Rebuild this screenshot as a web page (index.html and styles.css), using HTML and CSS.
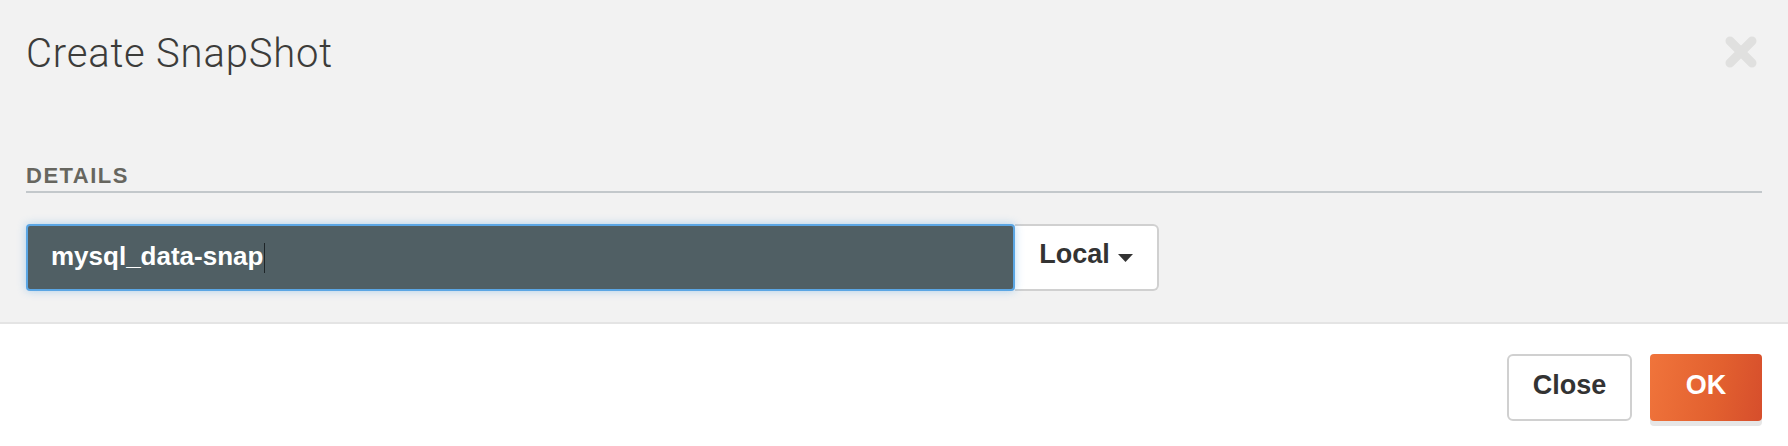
FILE: index.html
```html
<!DOCTYPE html>
<html lang="en">
<head>
<meta charset="utf-8">
<title>Create SnapShot</title>
<link rel="stylesheet" href="styles.css">
</head>
<body>
<div class="dialog">
  <div class="header">
    <div class="title-row">
      <h1 class="title">Create SnapShot</h1>
      <svg class="close-x" viewBox="0 0 32 32" aria-label="Close">
        <path d="M5 5 L27 27 M27 5 L5 27" stroke="#e0e0df" stroke-width="9" stroke-linecap="round" fill="none"/>
      </svg>
    </div>
    <div class="section-label">DETAILS</div>
    <div class="field-row">
      <div class="name-input"><span class="value">mysql_data-snap</span><span class="caret"></span></div>
      <div class="select"><span>Local</span><svg class="tri" viewBox="0 0 15 8"><path d="M0 0 H15 L7.5 8 Z" fill="#333"/></svg></div>
    </div>
  </div>
  <div class="footer">
    <button class="btn btn-close">Close</button>
    <button class="btn btn-ok">OK</button>
  </div>
</div>
</body>
</html>
```
FILE: styles.css
```css
html, body {
  margin: 0;
  padding: 0;
  background: #ffffff;
}
body {
  font-family: "Liberation Sans", Arial, sans-serif;
  width: 1788px;
}
.header {
  background: #f2f2f2;
  padding: 30px 26px 31px;
  border-bottom: 2px solid #e4e4e4;
}
.title-row {
  display: flex;
  justify-content: space-between;
  align-items: flex-start;
}
.title {
  margin: 0;
  font-family: Roboto, "Liberation Sans", sans-serif;
  font-weight: 300;
  font-size: 40px;
  line-height: 48px;
  letter-spacing: 0.8px;
  color: #3c3c3a;
}
.close-x {
  width: 32px;
  height: 32px;
  margin-top: 6px;
  margin-right: 5px;
}
.section-label {
  margin-top: 86px;
  font-size: 22px;
  font-weight: 700;
  line-height: 24px;
  letter-spacing: 1.5px;
  color: #67665f;
  padding-bottom: 3px;
  border-bottom: 2px solid #c3c8cb;
}
.field-row {
  margin-top: 31px;
  display: flex;
  height: 67px;
}
.name-input {
  width: 989px;
  box-sizing: border-box;
  background: #505f64;
  border: 2px solid #5ba6e4;
  border-radius: 4px;
  box-shadow: 0 0 8px rgba(91, 166, 228, 0.45);
  color: #ffffff;
  font-size: 26px;
  font-weight: 700;
  display: flex;
  align-items: center;
  padding: 0 0 3px 23px;
  position: relative;
  z-index: 1;
}
.caret {
  width: 1px;
  height: 30px;
  background: #1e2528;
  margin-left: 1px;
  margin-top: 4px;
}
.select {
  width: 144px;
  box-sizing: border-box;
  border: 2px solid #d0d0d0;
  border-left: none;
  border-radius: 0 6px 6px 0;
  background: #ffffff;
  display: flex;
  align-items: center;
  justify-content: center;
  gap: 8px;
  font-size: 27px;
  font-weight: 700;
  color: #333333;
  padding-bottom: 6px;
}
.tri {
  width: 15px;
  height: 8px;
  margin-top: 6px;
}
.footer {
  display: flex;
  justify-content: flex-end;
  gap: 18px;
  padding: 30px 26px 25px;
}
.btn {
  height: 67px;
  box-sizing: border-box;
  font-family: "Liberation Sans", Arial, sans-serif;
  font-size: 27px;
  font-weight: 700;
  padding: 0 0 4px;
  cursor: pointer;
}
.btn-close {
  width: 125px;
  border: 2px solid #d0d0d0;
  border-radius: 6px;
  background: #ffffff;
  color: #333333;
}
.btn-ok {
  width: 112px;
  border: none;
  border-radius: 4px;
  background: linear-gradient(100deg, #f0743b 0%, #e2602f 60%, #d64e2c 100%);
  color: #ffffff;
  box-shadow: 0 5px 0 #e6e6e6;
}
```
